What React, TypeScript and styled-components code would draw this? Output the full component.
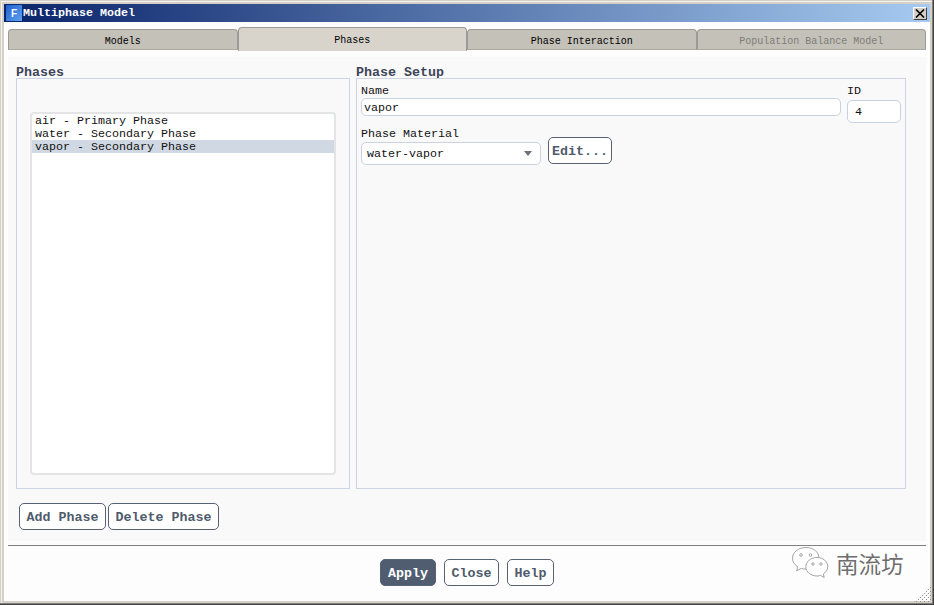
import React from 'react';
import styled, { createGlobalStyle } from 'styled-components';

const Global = createGlobalStyle`
  html, body { margin: 0; padding: 0; background: #d4d0c8; }
  * { box-sizing: border-box; }
`;

const mono = `"Liberation Mono", "Courier New", monospace`;

const Win = styled.div`
  position: relative;
  width: 934px;
  height: 605px;
  display: flex;
  flex-direction: column;
  background: #fdfdfd;
  border: 4px solid #d4d0c8;
  font-family: ${mono};
  font-size: 11.67px;
  color: #111;
`;

const FrameEdge = styled.div`
  position: absolute;
  inset: -4px;
  pointer-events: none;
  box-shadow: inset -1px -1px 0 #404040, inset -2px -2px 0 #808080, inset 1px 1px 0 #d4d0c8, inset 2px 2px 0 #f4f3ee;
`;

const TitleBar = styled.div`
  height: 18px;
  flex: none;
  display: flex;
  align-items: center;
  padding: 0 3px 0 2px;
  background: linear-gradient(90deg, #0a246a 0%, #a6caf0 100%);
  color: #fff;
  font-weight: 700;
`;

const AppIcon = styled.div`
  width: 16px;
  height: 16px;
  flex: none;
  margin-right: 1px;
  display: flex;
  align-items: center;
  justify-content: center;
  background: linear-gradient(135deg, #1f5fd0, #5ea2f0);
  color: #fff;
  font-size: 10px;
  font-weight: 700;
  font-family: "Liberation Sans", sans-serif;
`;

const TitleText = styled.span`
  flex: 1;
  line-height: 18px;
`;

const CloseBox = styled.div`
  width: 14px;
  height: 13px;
  background: #d4d0c8;
  border: 1px solid;
  border-color: #fff #404040 #404040 #fff;
  display: flex;
  align-items: center;
  justify-content: center;
`;

const Inner = styled.div`
  flex: 1;
  display: flex;
  flex-direction: column;
  padding: 0 4px;
`;

const Tabs = styled.div`
  display: flex;
  height: 24px;
  margin-top: 5px;
  flex: none;
`;

const Tab = styled.div<{ $active?: boolean; $disabled?: boolean }>`
  flex: 1 1 0;
  display: flex;
  align-items: center;
  justify-content: center;
  font-size: 10px;
  height: ${p => (p.$active ? '24px' : '21px')};
  margin-top: ${p => (p.$active ? '0' : '2px')};
  background: ${p => (p.$active ? '#d8d4cc' : '#c4c1b9')};
  color: ${p => (p.$disabled ? '#7d7d78' : '#000')};
  border: 1px solid #9c9a94;
  border-bottom: ${p => (p.$active ? 'none' : '1px solid #aaa8a2')};
  border-radius: 4px 4px 0 0;
  padding-top: ${p => (p.$active ? '1px' : '3px')};
`;

const Panel = styled.div`
  margin-top: 6px;
  height: 484px;
  flex: none;
  background: #f9f9f9;
  padding: 8px 20px 11px 8px;
  display: flex;
  flex-direction: column;
`;

const Columns = styled.div`
  display: flex;
  gap: 6px;
  height: 424px;
  flex: none;
`;

const Column = styled.div<{ $w: number }>`
  width: ${p => p.$w}px;
  display: flex;
  flex-direction: column;
`;

const Heading = styled.div`
  font-size: 13.33px;
  font-weight: 700;
  line-height: 15px;
  height: 13px;
  color: #3c4658;
`;

const GroupBox = styled.div`
  flex: 1;
  border: 1px solid #ccd4e4;
  display: flex;
  flex-direction: column;
`;

const PhaseBox = styled(GroupBox)`
  padding: 33px 13px 13px 13px;
`;

const SetupBox = styled(GroupBox)`
  padding: 5px 4px 0 4px;
`;

const PhaseList = styled.div`
  flex: 1;
  background: #fff;
  border: 2px solid #e2e4e6;
  border-radius: 4px;
  padding: 0;
`;

const Row = styled.div<{ $sel?: boolean }>`
  height: 13px;
  line-height: 15px;
  padding-left: 3px;
  white-space: pre;
  background: ${p => (p.$sel ? '#d0d9e3' : 'transparent')};
`;

const FieldRow = styled.div`
  display: flex;
  gap: 6px;
  height: 39px;
`;

const Field = styled.div<{ $w: number }>`
  width: ${p => p.$w}px;
`;

const Label = styled.div`
  height: 13px;
  line-height: 15px;
`;

const Input = styled.div<{ $h: number; $mt: number; $pl: number }>`
  height: ${p => p.$h}px;
  margin-top: ${p => p.$mt}px;
  line-height: ${p => p.$h}px;
  padding-left: ${p => p.$pl}px;
  background: #fff;
  border: 1px solid #c8d2e0;
  border-radius: 5px;
`;

const MaterialRow = styled.div`
  display: flex;
  margin-top: 4px;
  gap: 7px;
`;

const Select = styled(Input)`
  display: flex;
  align-items: center;
  justify-content: space-between;
  padding-right: 8px;
  padding-top: 2px;
`;

const Caret = styled.span`
  width: 0;
  height: 0;
  margin-top: -2px;
  border-left: 4px solid transparent;
  border-right: 4px solid transparent;
  border-top: 5px solid #6a7280;
`;

const Btn = styled.button<{ $w: number; $primary?: boolean }>`
  width: ${p => p.$w}px;
  height: 27px;
  padding: 2px 0 0;
  font-family: ${mono};
  font-size: 13.33px;
  font-weight: 700;
  border-radius: 5px;
  border: 1px solid #566274;
  background: ${p => (p.$primary ? '#505d70' : '#fff')};
  color: ${p => (p.$primary ? '#fff' : '#4f5b6c')};
`;

const EditBtn = styled(Btn)`
  margin-top: 10px;
`;

const ActionRow = styled.div`
  display: flex;
  gap: 2px;
  margin-top: 14px;
  margin-left: 3px;
`;

const Rule = styled.div`
  height: 1px;
  margin-top: 4px;
  background: #808080;
  flex: none;
`;

const Footer = styled.div`
  display: flex;
  justify-content: center;
  gap: 8px;
  padding-top: 13px;
`;

const Watermark = styled.div`
  position: absolute;
  left: 787px;
  top: 542px;
  display: flex;
  align-items: center;
  gap: 7px;
  color: #6e6e6e;
  font-family: "Noto Sans CJK SC", sans-serif;
  font-size: 22.5px;
  font-weight: 400;
  line-height: 34px;
`;

const Grip = styled.svg`
  position: absolute;
  right: -2px;
  bottom: -2px;
`;

const App: React.FC = () => (
  <>
    <Global />
    <Win>
      <TitleBar>
        <AppIcon>F</AppIcon>
        <TitleText>Multiphase Model</TitleText>
        <CloseBox>
          <svg width="10" height="9" viewBox="0 0 10 9">
            <path d="M1 0.5 L9 8.5 M9 0.5 L1 8.5" stroke="#000" strokeWidth="1.6" fill="none" />
          </svg>
        </CloseBox>
      </TitleBar>
      <Inner>
        <Tabs>
          <Tab>Models</Tab>
          <Tab $active>Phases</Tab>
          <Tab>Phase Interaction</Tab>
          <Tab $disabled>Population Balance Model</Tab>
        </Tabs>
        <Panel>
          <Columns>
            <Column $w={334}>
              <Heading>Phases</Heading>
              <PhaseBox>
                <PhaseList>
                  <Row>air - Primary Phase</Row>
                  <Row>water - Secondary Phase</Row>
                  <Row $sel>vapor - Secondary Phase</Row>
                </PhaseList>
              </PhaseBox>
            </Column>
            <Column $w={550}>
              <Heading>Phase Setup</Heading>
              <SetupBox>
                <FieldRow>
                  <Field $w={480}>
                    <Label>Name</Label>
                    <Input $h={18} $mt={1} $pl={2}>vapor</Input>
                  </Field>
                  <Field $w={54}>
                    <Label>ID</Label>
                    <Input $h={23} $mt={3} $pl={7}>4</Input>
                  </Field>
                </FieldRow>
                <MaterialRow>
                  <Field $w={180}>
                    <Label>Phase Material</Label>
                    <Select $h={23} $mt={2} $pl={5}>
                      water-vapor
                      <Caret />
                    </Select>
                  </Field>
                  <EditBtn $w={64}>Edit...</EditBtn>
                </MaterialRow>
              </SetupBox>
            </Column>
          </Columns>
          <ActionRow>
            <Btn $w={87}>Add Phase</Btn>
            <Btn $w={111}>Delete Phase</Btn>
          </ActionRow>
        </Panel>
        <Rule />
        <Footer>
          <Btn $w={56} $primary>Apply</Btn>
          <Btn $w={55}>Close</Btn>
          <Btn $w={47}>Help</Btn>
        </Footer>
      </Inner>
      <Watermark>
        <svg width="38" height="34" viewBox="0 0 38 34" fill="#fff" stroke="#9a9a9a" strokeWidth="0.9">
          <path d="M15 1.5 C7.5 1.5 1.5 6.2 1.5 12.2 C1.5 15.8 3.6 18.8 6.8 20.8 L5.6 24.8 L10.3 22.4 C12 22.9 13.5 23.1 15 23.1 C22 23.1 28 18.4 28 12.2 C28 6.2 22.5 1.5 15 1.5 Z" />
          <circle cx="10" cy="9" r="1.3" />
          <circle cx="19.5" cy="9" r="1.3" />
          <path d="M26 11.5 C19.8 11.5 14.8 15.6 14.8 20.8 C14.8 26 19.8 30 26 30 C27.3 30 28.5 29.8 29.6 29.4 L33.2 31.5 L32.3 28 C34.9 26.2 36.8 23.7 36.8 20.8 C36.8 15.6 32 11.5 26 11.5 Z" />
          <circle cx="22" cy="18" r="1.2" />
          <circle cx="30" cy="18" r="1.2" />
        </svg>
        <span>南流坊</span>
      </Watermark>
      <Grip width="17" height="17" viewBox="0 0 17 17">
        <path d="M1 16 L16 1 M5 16 L16 5 M9 16 L16 9 M13 16 L16 13" stroke="#8a8a8a" strokeWidth="1" strokeDasharray="1.4 1.4" fill="none" />
      </Grip>
      <FrameEdge />
    </Win>
  </>
);

export default App;
